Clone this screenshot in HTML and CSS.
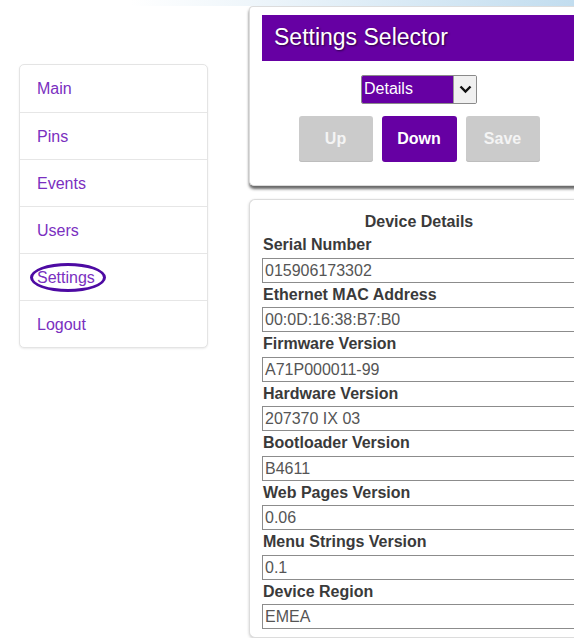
FILE: index.html
```html
<!DOCTYPE html>
<html lang="en">
<head>
<meta charset="utf-8">
<title>Settings - Device Details</title>
<link rel="stylesheet" href="styles.css">
</head>
<body>
<div class="topband"></div>
<div class="layout">
  <nav class="menu">
    <a class="menu-item" href="#">Main</a>
    <a class="menu-item" href="#">Pins</a>
    <a class="menu-item" href="#">Events</a>
    <a class="menu-item" href="#">Users</a>
    <a class="menu-item current" href="#"><span class="mark">Settings</span></a>
    <a class="menu-item" href="#">Logout</a>
  </nav>

  <main class="content">
    <section class="card selector">
      <h1 class="card-title">Settings Selector</h1>
      <div class="picker">
        <label class="select">
          <select>
            <option>Details</option>
          </select>
          <span class="arrow">
            <svg width="13" height="9" viewBox="0 0 13 9"><path d="M1.5 1.5 L6.5 6.5 L11.5 1.5" fill="none" stroke="#111" stroke-width="2.4"/></svg>
          </span>
        </label>
      </div>
      <div class="buttons">
        <button class="btn disabled">Up</button>
        <button class="btn primary">Down</button>
        <button class="btn disabled">Save</button>
      </div>
    </section>

    <section class="card details">
      <h2 class="details-title">Device Details</h2>
      <div class="field"><div class="label">Serial Number</div><div class="value">015906173302</div></div>
      <div class="field"><div class="label">Ethernet MAC Address</div><div class="value">00:0D:16:38:B7:B0</div></div>
      <div class="field"><div class="label">Firmware Version</div><div class="value">A71P000011-99</div></div>
      <div class="field"><div class="label">Hardware Version</div><div class="value">207370 IX 03</div></div>
      <div class="field"><div class="label">Bootloader Version</div><div class="value">B4611</div></div>
      <div class="field"><div class="label">Web Pages Version</div><div class="value">0.06</div></div>
      <div class="field"><div class="label">Menu Strings Version</div><div class="value">0.1</div></div>
      <div class="field"><div class="label">Device Region</div><div class="value">EMEA</div></div>
    </section>
  </main>
</div>
</body>
</html>
```
FILE: styles.css
```css
html, body {
  margin: 0;
  padding: 0;
  background: #ffffff;
  overflow: hidden;
  font-family: "Liberation Sans", Arial, sans-serif;
}

.topband {
  height: 6px;
  background: linear-gradient(to right, #ffffff 0px, #ffffff 130px, #c2ddef 100%);
}

.layout {
  display: flex;
  align-items: flex-start;
}

/* side navigation */
.menu {
  width: 187px;
  margin: 58px 0 0 19px;
  border: 1px solid #e4e4e4;
  border-radius: 5px;
  box-shadow: 0 1px 2px rgba(0, 0, 0, 0.08);
  background: #fff;
  display: flex;
  flex-direction: column;
  flex-shrink: 0;
}

.menu-item {
  display: flex;
  align-items: center;
  height: 46px;
  padding-left: 17px;
  padding-top: 1px;
  box-sizing: content-box;
  border-top: 1px solid #e6e6e6;
  color: #7a2fc0;
  text-decoration: none;
  font-size: 16px;
}

.menu-item:first-child {
  border-top: none;
}

.menu-item + .menu-item {
  height: 45px;
}

.mark {
  position: relative;
}

.mark::after {
  content: "";
  position: absolute;
  left: -7px;
  top: -6px;
  width: 70px;
  height: 23px;
  border: 3px solid #4d0aa3;
  border-radius: 50%;
}

/* main column */
.content {
  margin-left: 41px;
  width: 340px;
  flex-shrink: 0;
  display: flex;
  flex-direction: column;
  gap: 13px;
}

.card {
  background: #fff;
  border: 1px solid #dcdcdc;
  border-right: none;
  box-sizing: border-box;
}

.selector {
  border-radius: 4px 0 0 5px;
  padding: 8px 13px 23px 12px;
  box-shadow: 0 3px 3px rgba(0, 0, 0, 0.6);
}

.card-title {
  margin: 0;
  height: 46px;
  padding-left: 12px;
  padding-bottom: 2px;
  box-sizing: border-box;
  display: flex;
  align-items: center;
  background: #6600a3;
  color: #fff;
  font-size: 23px;
  font-weight: normal;
  text-shadow: 1px 1px 2px #2a0040;
}

.picker {
  display: flex;
  justify-content: center;
  margin-top: 14px;
}

.select {
  display: flex;
  height: 29px;
  width: 116px;
  box-sizing: border-box;
  border: 1px solid #8a8a8a;
  border-radius: 2px;
  overflow: hidden;
}

.select select {
  appearance: none;
  -webkit-appearance: none;
  flex: 1;
  border: none;
  margin: 0;
  padding: 0 0 2px 2px;
  background: #6600a3;
  color: #fff;
  font-family: "Liberation Sans", Arial, sans-serif;
  font-size: 16px;
  outline: none;
}

.arrow {
  width: 22px;
  display: flex;
  align-items: center;
  justify-content: center;
  background: #f0f0f0;
  border-left: 1px solid #9a9a9a;
}

.buttons {
  display: flex;
  justify-content: center;
  gap: 9px;
  margin-top: 12px;
}

.btn {
  width: 74px;
  height: 46px;
  border: none;
  border-radius: 3px;
  font-family: "Liberation Sans", Arial, sans-serif;
  font-size: 16px;
  font-weight: bold;
  color: #fff;
}

.btn.disabled {
  background: #cbcbcb;
  color: #f4f4f4;
  box-shadow: inset 0 -1px 0 #bdbdbd;
}

.btn.primary {
  background: #6600a3;
  width: 75px;
}

/* device details */
.details {
  border-radius: 6px 0 0 6px;
  padding: 11px 0 8px 12px;
  box-shadow: 0 1px 3px rgba(0, 0, 0, 0.2);
}

.details-title {
  margin: 0;
  height: 22px;
  line-height: 22px;
  text-align: center;
  padding-right: 13px;
  font-size: 16px;
  color: #3a3a3a;
}

.field {
  display: flex;
  flex-direction: column;
}

.label {
  height: 24.5px;
  line-height: 24.5px;
  padding-left: 1px;
  font-size: 16px;
  font-weight: bold;
  color: #3a3a3a;
}

.value {
  height: 25px;
  box-sizing: border-box;
  border: 1px solid #8c8c8c;
  border-right: none;
  padding-left: 2px;
  line-height: 24px;
  font-size: 16px;
  color: #555;
}
```
